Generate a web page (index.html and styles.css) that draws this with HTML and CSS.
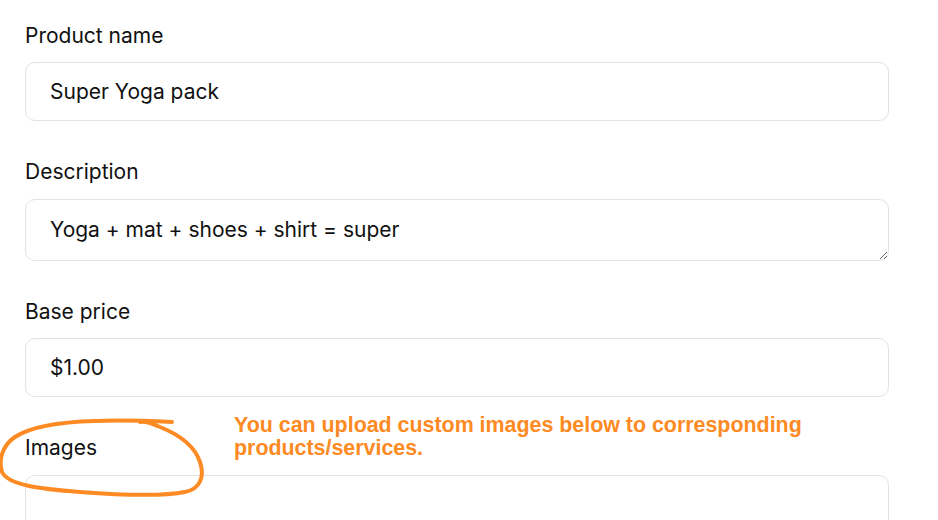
FILE: index.html
```html
<!DOCTYPE html>
<html>
<head>
<meta charset="utf-8">
<link rel="stylesheet" href="styles.css">
</head>
<body>
<form class="form">
  <div class="field">
    <label class="label">Product name</label>
    <input class="input" type="text" value="Super Yoga pack">
  </div>
  <div class="field field-desc">
    <label class="label">Description</label>
    <textarea class="input textarea" rows="1">Yoga + mat + shoes + shirt = super</textarea>
  </div>
  <div class="field">
    <label class="label">Base price</label>
    <input class="input" type="text" value="$1.00">
  </div>
  <div class="field images-field">
    <label class="label">Images</label>
    <div class="dropzone"></div>
    <p class="note">You can upload custom images below to corresponding<br>products/services.</p>
    <svg class="circle" width="210" height="90" viewBox="0 0 210 90">
      <path d="M172 5 C150 4 120 3 95 4 C60 5 30 10 15 20 C3 28 -2 42 2 55 C8 68 40 72 80 75 C120 78 160 80 185 75 C200 72 205 60 200 45 C195 30 180 18 160 10 C150 6 145 4 140 5" fill="none" stroke="#fd8a22" stroke-width="4" stroke-linecap="round"/>
    </svg>
  </div>
</form>
</body>
</html>
```
FILE: styles.css
```css
html, body {
  margin: 0;
  padding: 0;
  background: #ffffff;
}
body {
  font-family: Inter, "Noto Sans", sans-serif;
  color: #111111;
  overflow: hidden;
  height: 520px;
}
.form {
  width: 864px;
  margin-left: 25px;
  padding-top: 24px;
  display: flex;
  flex-direction: column;
  gap: 39px;
}
.field {
  display: flex;
  flex-direction: column;
  gap: 14px;
}
.field-desc {
  gap: 15px;
}
.label {
  font-size: 21px;
  line-height: 24px;
  color: #111111;
}
.input {
  box-sizing: border-box;
  width: 100%;
  height: 59px;
  border: 1px solid #e2e2e2;
  border-radius: 10px;
  padding: 0 24px;
  font-family: Inter, "Noto Sans", sans-serif;
  font-size: 21px;
  color: #111111;
  background: #ffffff;
  outline: none;
}
.textarea {
  height: 62px;
  padding: 17px 24px;
  line-height: 26px;
  resize: vertical;
  display: block;
}
.images-field {
  position: relative;
  gap: 15px;
}
.dropzone {
  box-sizing: border-box;
  height: 120px;
  border: 1px solid #e2e2e2;
  border-radius: 10px;
}
.note {
  position: absolute;
  left: 209px;
  top: -22px;
  margin: 0;
  font-family: "Liberation Sans", Arial, sans-serif;
  font-weight: bold;
  font-size: 21.4px;
  line-height: 23px;
  color: #fd8a22;
}
.circle {
  position: absolute;
  left: -25px;
  top: -19px;
}
```
